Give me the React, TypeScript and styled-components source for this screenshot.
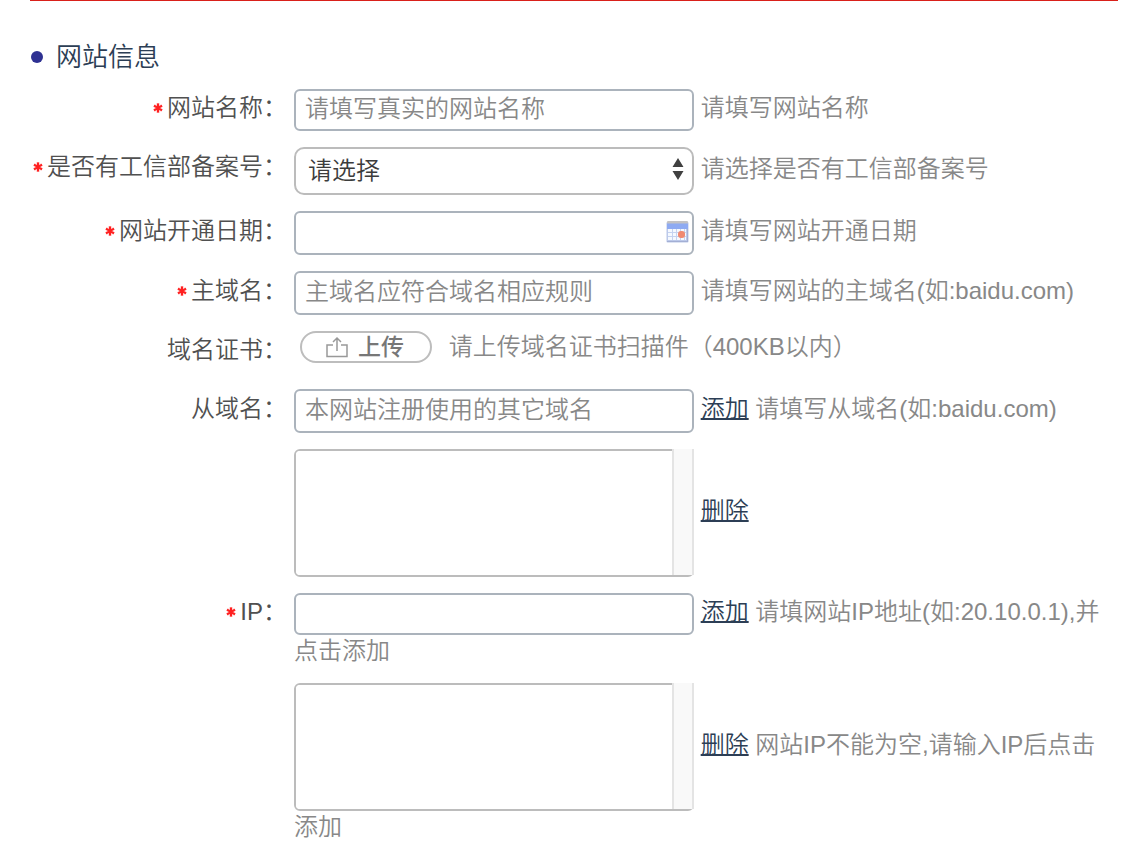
import React from "react";
import styled, { createGlobalStyle } from "styled-components";

const GlobalStyle = createGlobalStyle`
  *, *::before, *::after { box-sizing: border-box; }
  body {
    margin: 0;
    background: #fff;
    color: #888;
    font: 350 24px/32px "Liberation Sans", "Noto Sans CJK SC", sans-serif;
  }
  input, select, button { font: inherit; }
`;

const Page = styled.main`
  padding: 0 28px 24px 30px;
`;

const SectionTitle = styled.h2`
  display: flex;
  align-items: center;
  gap: 12px;
  margin: 0;
  padding: 39px 0 15px;
  border-top: 1px solid #d9201a;
  color: #2c3e55;
  font-size: 26px;
  font-weight: 350;
  line-height: 34px;
`;

const Form = styled.form`
  display: grid;
  gap: 16px;
`;

const Row = styled.div`
  display: grid;
  grid-template-columns: 257px minmax(0, 1fr);
  column-gap: 7px;
  min-height: 42px;
`;

const Label = styled.label<{ $height: number }>`
  display: flex;
  align-items: center;
  justify-content: flex-end;
  gap: 4px;
  height: ${(p) => p.$height}px;
  color: #505050;
  white-space: nowrap;
`;

const Field = styled.span`
  position: relative;
  display: inline-block;
  width: 400px;
  vertical-align: middle;
`;

const TextInput = styled.input<{ $height?: number }>`
  display: block;
  width: 100%;
  height: ${(p) => p.$height ?? 44}px;
  padding: 0 9px 2px;
  border: 2px solid #abb3bc;
  border-radius: 6px;
  outline: 0;
  background: #fff;
  color: #444;
  &::placeholder { color: #888; opacity: 1; }
`;

const Select = styled.select`
  display: block;
  width: 100%;
  height: 48px;
  padding: 0 36px 0 12px;
  border: 2px solid #bcbcbc;
  border-radius: 10px;
  appearance: none;
  background: #fff;
  color: #3c3c3c;
`;

const SelectArrows = styled.svg`
  position: absolute;
  top: 11px;
  right: 10px;
  pointer-events: none;
`;

const DateButton = styled.button`
  position: absolute;
  top: 10px;
  right: 5px;
  display: flex;
  padding: 0;
  border: 0;
  background: none;
`;

const ListFrame = styled(Field)`
  height: 128px;
  border: 2px solid #bcbcbc;
  border-radius: 6px;
  &::after {
    content: "";
    position: absolute;
    top: -2px;
    right: -2px;
    bottom: 0;
    width: 22px;
    border: solid #e4e4e4;
    border-width: 0 2px;
    background: #f9f9f9;
  }
`;

const ListBox = styled.select`
  display: block;
  width: 100%;
  height: 100%;
  border: 0;
  border-radius: 4px;
  outline: 0;
  background: #fff;
  color: #444;
`;

const UploadButton = styled.button`
  display: inline-flex;
  align-items: center;
  justify-content: center;
  gap: 10px;
  width: 132px;
  height: 32px;
  margin: 0 10px 0 6px;
  padding: 0 2px 0 0;
  border: 2px solid #bdbdbd;
  border-radius: 16px;
  background: #fff;
  color: #777;
  font-size: 23px;
  font-weight: 500;
  line-height: 28px;
  vertical-align: top;
`;

const ActionLink = styled.a`
  color: #2c3e55;
  text-decoration: underline;
  text-decoration-thickness: 2px;
`;

const Required = () => (
  <svg width="10" height="10" viewBox="0 0 10 10" stroke="#ff2020" aria-hidden="true">
    <path d="M5 0V10M1 2.5L9 7.5M9 2.5L1 7.5" strokeWidth="3" opacity=".3" />
    <path d="M5 .5V9.5M1 2.7L9 7.3M9 2.7L1 7.3" strokeWidth="2" />
  </svg>
);

const CalendarIcon = () => (
  <svg width="23" height="22" viewBox="0 0 23 22" aria-hidden="true">
    <rect x=".5" y="1" width="22" height="20.5" rx="1" fill="#bcc9ea" />
    <rect x="1" y="0" width="21" height="3" rx="1" fill="#c3c2c4" />
    <rect x="1" y="2.5" width="21" height="5.5" fill="#8eaaf2" />
    <rect x="2" y="8" width="18" height="11" fill="#f5f9ff" />
    <path d="M2 11.5H20M2 15.5H20M6.5 8V19M10.5 8V19M14.5 8V19M18.5 8V19" stroke="#c5d3f0" />
    <rect x="12" y="10" width="7" height="7" rx="3" fill="#f08a72" />
    <path d="M1 20.5H22M21.5 8V21" stroke="#a3afd4" />
  </svg>
);

const UploadIcon = () => (
  <svg width="22" height="22" viewBox="0 0 22 22" fill="none" stroke="#999" strokeWidth="1.5" aria-hidden="true">
    <path d="M7 9H1V20.5H21V9H15M11 15V2M7 6L11 2L15 6" />
  </svg>
);

type RowProps = {
  id: string;
  label?: string;
  labelHeight?: number;
  required?: boolean;
  children: React.ReactNode;
};

const FormRow = ({ id, label, labelHeight = 40, required, children }: RowProps) => (
  <Row>
    {label ? (
      <Label htmlFor={id} $height={labelHeight}>
        {required && <Required />}
        {label}：
      </Label>
    ) : (
      <span />
    )}
    <div>{children}</div>
  </Row>
);

export default function App() {
  return (
    <>
      <GlobalStyle />
      <Page>
        <SectionTitle>
          <svg width="14" height="14" viewBox="0 0 14 14" aria-hidden="true">
            <circle cx="7" cy="7" r="6" fill="#2e3192" />
          </svg>
          网站信息
        </SectionTitle>
        <Form onSubmit={(e) => e.preventDefault()}>
          <FormRow id="site-name" label="网站名称" labelHeight={38} required>
            <Field><TextInput id="site-name" $height={42} placeholder="请填写真实的网站名称" /></Field> 请填写网站名称
          </FormRow>
          <FormRow id="record" label="是否有工信部备案号" required>
            <Field>
              <Select id="record">
                <option>请选择</option>
                <option>是</option>
                <option>否</option>
              </Select>
              <SelectArrows width="12" height="22" viewBox="0 0 12 22" fill="#404040" aria-hidden="true">
                <path d="M6 0L11.5 9H.5ZM6 22L.5 13H11.5Z" />
              </SelectArrows>
            </Field> 请选择是否有工信部备案号
          </FormRow>
          <FormRow id="open-date" label="网站开通日期" required>
            <Field>
              <TextInput id="open-date" />
              <DateButton type="button" aria-label="选择日期"><CalendarIcon /></DateButton>
            </Field> 请填写网站开通日期
          </FormRow>
          <FormRow id="domain" label="主域名" required>
            <Field><TextInput id="domain" placeholder="主域名应符合域名相应规则" /></Field> 请填写网站的主域名(如:baidu.com)
          </FormRow>
          <FormRow id="certificate" label="域名证书" labelHeight={38}>
            <UploadButton id="certificate" type="button"><UploadIcon />上传</UploadButton> 请上传域名证书扫描件（400KB以内）
          </FormRow>
          <FormRow id="sub-domain" label="从域名">
            <Field><TextInput id="sub-domain" placeholder="本网站注册使用的其它域名" /></Field> <ActionLink href="#add-domain">添加</ActionLink> 请填写从域名(如:baidu.com)
          </FormRow>
          <FormRow id="domain-list">
            <ListFrame><ListBox id="domain-list" multiple aria-label="从域名列表" /></ListFrame> <ActionLink href="#remove-domain">删除</ActionLink>
          </FormRow>
          <FormRow id="ip" label="IP" labelHeight={38} required>
            <Field><TextInput id="ip" $height={42} /></Field> <ActionLink href="#add-ip">添加</ActionLink> 请填网站IP地址(如:20.10.0.1),并点击添加
          </FormRow>
          <FormRow id="ip-list">
            <ListFrame><ListBox id="ip-list" multiple aria-label="IP列表" /></ListFrame> <ActionLink href="#remove-ip">删除</ActionLink> 网站IP不能为空,请输入IP后点击添加
          </FormRow>
        </Form>
      </Page>
    </>
  );
}
